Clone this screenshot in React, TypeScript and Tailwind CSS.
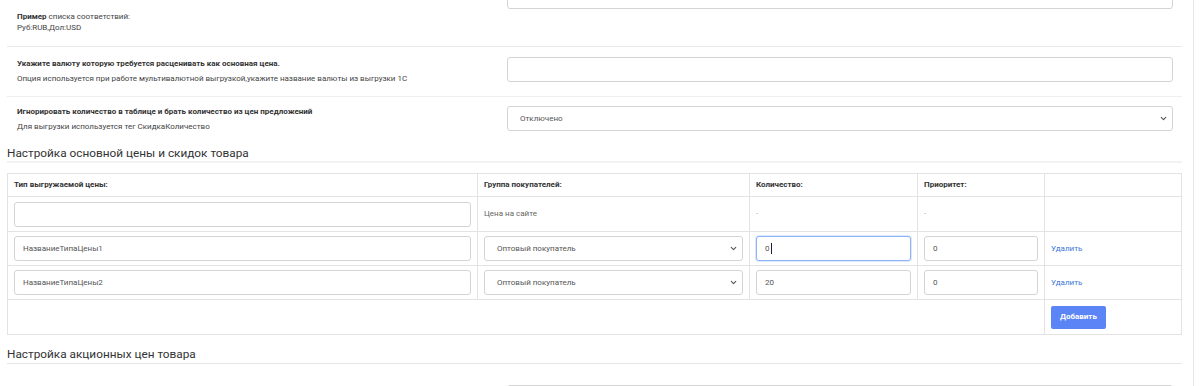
import { ChevronDown } from "lucide-react";

const font = "font-['Roboto','Liberation_Sans',sans-serif]";

const priceRows = [
  { name: "НазваниеТипаЦены1", group: "Оптовый покупатель", qty: "0", prio: "0", focused: true },
  { name: "НазваниеТипаЦены2", group: "Оптовый покупатель", qty: "20", prio: "0", focused: false },
];

function TextInput({ value = "", focused = false, className = "" }: { value?: string; focused?: boolean; className?: string }) {
  return (
    <div
      className={`flex h-[25px] items-center rounded-[3px] border bg-white px-[8px] text-[8px] text-[#555] ${
        focused ? "border-[#8fb4f5] shadow-[0_0_0_1px_rgba(120,160,240,0.25)]" : "border-[#d4d4d4]"
      } ${className}`}
    >
      {value}
      {focused && <span className="ml-px inline-block h-[11px] w-px bg-[#222]" />}
    </div>
  );
}

function Select({ value, className = "" }: { value: string; className?: string }) {
  return (
    <div className={`flex h-[25px] items-center justify-between rounded-[3px] border border-[#d4d4d4] bg-white pl-[12px] pr-[4px] text-[8px] text-[#555] ${className}`}>
      <span>{value}</span>
      <ChevronDown size={9} strokeWidth={3} className="text-[#555]" />
    </div>
  );
}

export default function App() {
  return (
    <div className={`${font} h-[386px] w-[1200px] overflow-hidden bg-white text-[#444]`}>
      <div className="h-full w-[1194px] border-r border-[#e6e6e6] pl-[7px] pr-[11px]">
        {/* option rows */}
        <div className="grid grid-cols-[500px_1fr] border-b border-[#e9e9e9] pb-[13px]">
          <div className="pl-[10px] pt-[11px] text-[8px] leading-[11px]">
            <div>
              <b className="text-[#333]">Пример</b> списка соответствий:
            </div>
            <div>Руб:RUB,Дол:USD</div>
          </div>
          <div className="-mt-[16px] pr-[9px]">
            <TextInput className="h-[23px]" />
          </div>
        </div>

        <div className="grid h-[50px] grid-cols-[500px_1fr] border-b border-[#eeeeee]">
          <div className="pl-[10px] pt-[11px] text-[8px]">
            <div className="font-bold leading-[11px] text-[#333]">Укажите валюту которую требуется расценивать как основная цена.</div>
            <div className="mt-[4px] leading-[11px]">Опция используется при работе мультивалютной выгрузкой,укажите название валюты из выгрузки 1С</div>
          </div>
          <div className="pr-[9px] pt-[10px]">
            <TextInput className="h-[23px]" />
          </div>
        </div>

        <div className="grid h-[49px] grid-cols-[500px_1fr]">
          <div className="pl-[10px] pt-[9px] text-[8px]">
            <div className="font-bold leading-[11px] text-[#333]">Игнорировать количество в таблице и брать количество из цен предложений</div>
            <div className="mt-[4px] leading-[11px]">Для выгрузки используется тег СкидкаКоличество</div>
          </div>
          <div className="pr-[9px] pt-[9px]">
            <Select value="Отключено" className="h-[23px]" />
          </div>
        </div>

        {/* main price section */}
        <h3 className="border-b-2 border-[#f2f2f2] text-[11.8px] leading-[15px] text-[#333]">
          Настройка основной цены и скидок товара
        </h3>

        <table className="mt-[10px] w-full border-collapse text-[8px]">
          <thead>
            <tr className="h-[23px]">
              <th className="h-[23px] w-[470px] border border-[#e3e3e3] py-0 pl-[6px] text-left font-bold text-[#333]">Тип выгружаемой цены:</th>
              <th className="h-[23px] w-[272px] border border-[#e3e3e3] py-0 pl-[6px] text-left font-bold text-[#333]">Группа покупателей:</th>
              <th className="h-[23px] w-[168px] border border-[#e3e3e3] py-0 pl-[6px] text-left font-bold text-[#333]">Количество:</th>
              <th className="h-[23px] w-[127px] border border-[#e3e3e3] py-0 pl-[6px] text-left font-bold text-[#333]">Приоритет:</th>
              <th className="h-[23px] border border-[#e3e3e3]" />
            </tr>
          </thead>
          <tbody>
            <tr className="h-[35px]">
              <td className="border border-[#e3e3e3] px-[6px]">
                <TextInput />
              </td>
              <td className="border border-[#e3e3e3] px-[6px] text-[#666]">Цена на сайте</td>
              <td className="border border-[#e3e3e3] px-[6px] text-[#aaa]">-</td>
              <td className="border border-[#e3e3e3] px-[6px] text-[#aaa]">-</td>
              <td className="border border-[#e3e3e3]" />
            </tr>
            {priceRows.map((r) => (
              <tr key={r.name} className="h-[34px]">
                <td className="border border-[#e3e3e3] px-[6px]">
                  <TextInput value={r.name} />
                </td>
                <td className="border border-[#e3e3e3] px-[6px]">
                  <Select value={r.group} />
                </td>
                <td className="border border-[#e3e3e3] px-[6px]">
                  <TextInput value={r.qty} focused={r.focused} />
                </td>
                <td className="border border-[#e3e3e3] px-[6px]">
                  <TextInput value={r.prio} className="text-[#4a6fa5]" />
                </td>
                <td className="border border-[#e3e3e3] px-[6px] text-[#3d78d8]">Удалить</td>
              </tr>
            ))}
            <tr className="h-[35px]">
              <td colSpan={4} className="border border-[#e3e3e3]" />
              <td className="border border-[#e3e3e3] px-[6px]">
                <button className="h-[23px] rounded-[2px] bg-[#5b84f6] px-[9px] text-[8px] font-bold text-white">Добавить</button>
              </td>
            </tr>
          </tbody>
        </table>

        <h3 className="mt-[12px] border-b border-[#e6e6e6] pb-[1px] text-[11.8px] leading-[15px] text-[#333]">
          Настройка акционных цен товара
        </h3>

        <div className="mt-[21px] grid grid-cols-[500px_1fr]">
          <div />
          <div className="pr-[9px]">
            <TextInput className="h-[23px]" />
          </div>
        </div>
      </div>
    </div>
  );
}
